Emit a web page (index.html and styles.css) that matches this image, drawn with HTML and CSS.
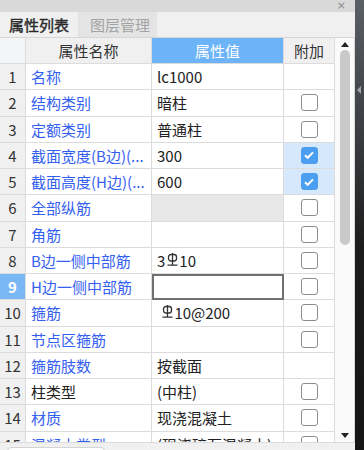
FILE: index.html
```html
<!DOCTYPE html>
<html lang="zh-CN">
<head>
    <meta charset="UTF-8">
    <title>属性列表</title>
    <link rel="stylesheet" href="styles.css">
</head>
<body>

<div class="wrap">
    <div class="panel">
        <div class="titlebar"><span class="close">×</span></div>

        <div class="tabs">
            <div class="tab on">属性列表</div>
            <div class="tab">图层管理</div>
        </div>

        <div class="body">
            <div class="grid">
                <div class="hd num"></div>
                <div class="hd">属性名称</div>
                <div class="hd blue">属性值</div>
                <div class="hd">附加</div>

                <div class="num">1</div><div class="name">名称</div><div class="val">lc1000</div><div class="add"></div>
                <div class="num">2</div><div class="name">结构类别</div><div class="val">暗柱</div><div class="add"><span class="cb"></span></div>
                <div class="num">3</div><div class="name">定额类别</div><div class="val">普通柱</div><div class="add"><span class="cb"></span></div>
                <div class="num">4</div><div class="name">截面宽度(B边)(...</div><div class="val">300</div><div class="add sel"><span class="cb on"></span></div>
                <div class="num">5</div><div class="name">截面高度(H边)(...</div><div class="val">600</div><div class="add sel"><span class="cb on"></span></div>
                <div class="num">6</div><div class="name">全部纵筋</div><div class="val off"></div><div class="add"><span class="cb"></span></div>
                <div class="num">7</div><div class="name">角筋</div><div class="val"></div><div class="add"><span class="cb"></span></div>
                <div class="num">8</div><div class="name">B边一侧中部筋</div><div class="val">3<i class="bar"></i>10</div><div class="add"><span class="cb"></span></div>
                <div class="num cur">9</div><div class="name">H边一侧中部筋</div><div class="val edit"></div><div class="add"><span class="cb"></span></div>
                <div class="num">10</div><div class="name">箍筋</div><div class="val">&nbsp;<i class="bar"></i>10@200</div><div class="add"><span class="cb"></span></div>
                <div class="num">11</div><div class="name">节点区箍筋</div><div class="val"></div><div class="add"><span class="cb"></span></div>
                <div class="num">12</div><div class="name">箍筋肢数</div><div class="val">按截面</div><div class="add"></div>
                <div class="num">13</div><div class="name black">柱类型</div><div class="val">(中柱)</div><div class="add"><span class="cb"></span></div>
                <div class="num">14</div><div class="name">材质</div><div class="val">现浇混凝土</div><div class="add"><span class="cb"></span></div>
                <div class="num">15</div><div class="name">混凝土类型</div><div class="val">(现浇碎石混凝土)</div><div class="add"><span class="cb"></span></div>
            </div>

            <div class="scroll">
                <span class="up"></span>
                <span class="thumb"></span>
                <span class="down"></span>
            </div>
        </div>

        <div class="foot"><span class="box"></span></div>
    </div>

    <div class="edge"><span class="arrow"></span></div>
</div>

</body>
</html>
```

FILE: styles.css
```css
* {
    margin: 0;
    padding: 0;
    box-sizing: border-box;
}

body {
    width: 364px;
    height: 450px;
    overflow: hidden;
    font-family: "Noto Sans CJK SC", "Noto Sans", sans-serif;
    font-size: 15px;
    color: #222;
    background: #f0f0f0;
}

.wrap {
    display: flex;
    height: 450px;
}

.panel {
    width: 355px;
    display: flex;
    flex-direction: column;
}

/* 顶部标题条 */
.titlebar {
    height: 12px;
    flex-shrink: 0;
    background: #d9d9d9;
    display: flex;
    justify-content: flex-end;
    align-items: center;
    padding-right: 9px;
}
.titlebar .close {
    font-family: "DejaVu Sans", sans-serif;
    font-size: 11px;
    line-height: 12px;
    color: #8a8a8a;
}

/* 标签页 */
.tabs {
    height: 26px;
    flex-shrink: 0;
    display: flex;
    background: #f0f0f0;
    border-bottom: 1px solid #d6d6d6;
}
.tabs .tab {
    width: 80px;
    padding-left: 11px;
    line-height: 25px;
    color: #a3a3a3;
    background: #e4e4e4;
    border-right: 2px solid #f0f0f0;
}
.tabs .tab.on {
    width: 79px;
    padding-left: 9px;
    color: #2a2a2a;
    background: #f0f0f0;
    border-right: 1px solid #e0e0e0;
    -webkit-text-stroke: 0.4px #2a2a2a;
}

/* 表格 */
.body {
    height: 404px;
    flex-shrink: 0;
    display: flex;
    overflow: hidden;
}
.grid {
    width: 335px;
    display: grid;
    grid-template-columns: 26px 126px 132px 51px;
    grid-template-rows: 26px;
    grid-auto-rows: 26.26px;
    background: #fff;
}
.grid > div {
    display: flex;
    align-items: center;
    border-right: 1px solid #dcdcdc;
    border-bottom: 1px solid #dcdcdc;
    white-space: nowrap;
    overflow: hidden;
}
.grid .hd {
    justify-content: center;
    background: #f0f0f0;
    color: #333;
}
.grid .hd.blue {
    background: #6db3f8;
    color: #fff;
}
.grid .hd.num {
    background: #f3f5f7;
}
.grid .num {
    justify-content: center;
    background: #f0f0f0;
    color: #333;
}
.grid .num.cur {
    background: #7ab8f5;
    color: #fff;
    font-weight: bold;
}
.grid .name {
    padding-left: 5px;
    color: #3460f2;
}
.grid .name.black {
    color: #222;
}
.grid .val {
    padding-left: 5px;
}
.grid .val.off {
    background: #e8e8e8;
}
.grid .val.edit {
    border: 2px solid #707070;
}
.grid .add {
    justify-content: center;
}
.grid .add.sel {
    background: #d6e9fc;
}

/* 三级钢符号 */
.bar {
    display: inline-block;
    width: 11px;
    height: 13px;
    margin: 0 1px 2px 2px;
    background: url("data:image/svg+xml,%3Csvg xmlns='http://www.w3.org/2000/svg' width='11' height='13' viewBox='0 0 11 13'%3E%3Cg fill='none' stroke='%23333' stroke-width='1.3'%3E%3Crect x='1.5' y='1.5' width='8' height='6.5' rx='2.5'/%3E%3Cpath d='M5.5 0V12M0.5 12.2H10.5'/%3E%3C/g%3E%3C/svg%3E") no-repeat;
}

/* 复选框 */
.cb {
    width: 17px;
    height: 17px;
    border: 1.5px solid #8c8c8c;
    border-radius: 3px;
    background: #fff;
}
.cb.on {
    border-color: #4b9ef0;
    background: #4b9ef0 url("data:image/svg+xml,%3Csvg xmlns='http://www.w3.org/2000/svg' width='14' height='14' viewBox='0 0 14 14'%3E%3Cpath d='M3 7.2l2.7 2.6L11 4.4' fill='none' stroke='%23fff' stroke-width='2'/%3E%3C/svg%3E") center no-repeat;
}

/* 滚动条 */
.scroll {
    width: 20px;
    position: relative;
    background: #fafafa;
    border-right: 1px solid #d8d8d8;
}
.scroll .up,
.scroll .down {
    position: absolute;
    left: 6px;
    width: 0;
    height: 0;
    border-left: 4.5px solid transparent;
    border-right: 4.5px solid transparent;
}
.scroll .up {
    top: 4px;
    border-bottom: 5px solid #222;
}
.scroll .down {
    bottom: 4px;
    border-top: 5px solid #222;
}
.scroll .thumb {
    position: absolute;
    top: 12px;
    left: 5px;
    width: 10px;
    height: 195px;
    border-radius: 5px;
    background: #c9c9c9;
}

/* 底部 */
.foot {
    flex: 1;
    overflow: hidden;
    background: #f0f0f0;
    border-top: 1px solid #dcdcdc;
    padding: 4px 0 0 7px;
}
.foot .box {
    display: block;
    width: 98px;
    height: 12px;
    background: #fff;
    border: 1px solid #d4d4d4;
    border-radius: 4px;
}

/* 右侧深色边 */
.edge {
    width: 9px;
    position: relative;
    background: linear-gradient(#5b5f66, #3a3c40 30%, #1c1c1c 55%, #151515);
}
.edge .arrow {
    position: absolute;
    top: 86px;
    left: 2px;
    width: 0;
    height: 0;
    border-top: 4px solid transparent;
    border-bottom: 4px solid transparent;
    border-right: 4px solid #a0a4aa;
}
```
